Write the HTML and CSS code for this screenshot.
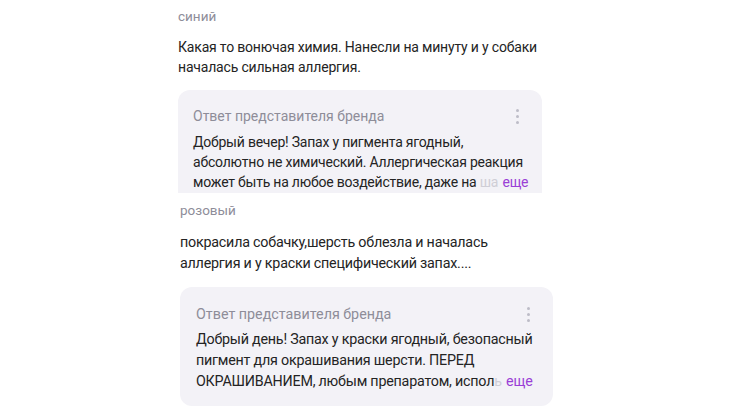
FILE: index.html
```html
<!DOCTYPE html>
<html lang="ru">
<head>
    <meta charset="UTF-8">
    <meta name="viewport" content="width=device-width, initial-scale=1.0">
    <title>Отзывы</title>
    <link rel="stylesheet" href="styles.css">
</head>
<body>
    <div class="feed">
        <div class="review review-cut">
            <div class="review-color">синий</div>
            <p class="review-text">Какая то вонючая химия. Нанесли на минуту и у собаки<br>началась сильная аллергия.</p>
            <div class="answer">
                <div class="answer-head">
                    <span class="answer-title">Ответ представителя бренда</span>
                    <span class="dots"><i></i><i></i><i></i></span>
                </div>
                <p class="answer-text">Добрый вечер! Запах у пигмента ягодный,<br>абсолютно не химический. Аллергическая реакция<br>может быть на любое воздействие, даже на <span class="fade">ша</span> <span class="more">еще</span></p>
            </div>
        </div>

        <div class="review review-wide">
            <div class="review-color">розовый</div>
            <p class="review-text">покрасила собачку,шерсть облезла и началась<br>аллергия и у краски специфический запах....</p>
            <div class="answer">
                <div class="answer-head">
                    <span class="answer-title">Ответ представителя бренда</span>
                    <span class="dots"><i></i><i></i><i></i></span>
                </div>
                <p class="answer-text">Добрый день! Запах у краски ягодный, безопасный<br>пигмент для окрашивания шерсти. ПЕРЕД<br>ОКРАШИВАНИЕМ, любым препаратом, испол<span class="fade">ь</span> <span class="more">еще</span></p>
            </div>
        </div>
    </div>
</body>
</html>
```

FILE: styles.css
```css
:root {
    --text-color: #242424;
    --muted-color: #8e8d99;
    --card-color: #f3f2f7;
    --accent-color: #9a3fd6;
}

* {
    margin: 0;
    padding: 0;
    box-sizing: border-box;
}

body {
    background: #ffffff;
    color: var(--text-color);
    font-family: Roboto, "Noto Sans", sans-serif;
    font-size: 14px;
    line-height: 20px;
}

.feed {
    display: flex;
    flex-direction: column;
}

.review {
    width: 364px;
    margin-left: 178px;
}

.review-text,
.answer-text {
    white-space: nowrap;
    letter-spacing: -0.22px;
}

.review-cut {
    height: 193px;
    padding-top: 6px;
    overflow: hidden;
}

.review-cut .review-text {
    letter-spacing: -0.18px;
}

.review-wide {
    width: 373px;
    margin-left: 180px;
    padding-top: 7px;
    font-size: 14.3px;
    line-height: 21px;
}

.review-color {
    color: var(--muted-color);
    font-size: 13.5px;
}

.review-text {
    margin-top: 11px;
}

.answer {
    background: var(--card-color);
    border-radius: 12px;
    padding: 16px 15px 16px 15px;
    margin-top: 13px;
}

.review-wide .answer {
    padding: 17px 15px 14px 16px;
    margin-top: 13px;
}

.answer-head {
    display: flex;
    justify-content: space-between;
    align-items: center;
}

.answer-title {
    color: var(--muted-color);
}

.dots {
    display: flex;
    flex-direction: column;
    gap: 3px;
    margin-right: 8px;
}

.dots i {
    width: 3px;
    height: 3px;
    border-radius: 50%;
    background: #bdbcc7;
}

.answer-text {
    margin-top: 6px;
}

.review-wide .answer-text {
    margin-top: 4px;
}

.fade {
    color: #cfced6;
}

.more {
    color: var(--accent-color);
    margin-left: 1px;
}
```
